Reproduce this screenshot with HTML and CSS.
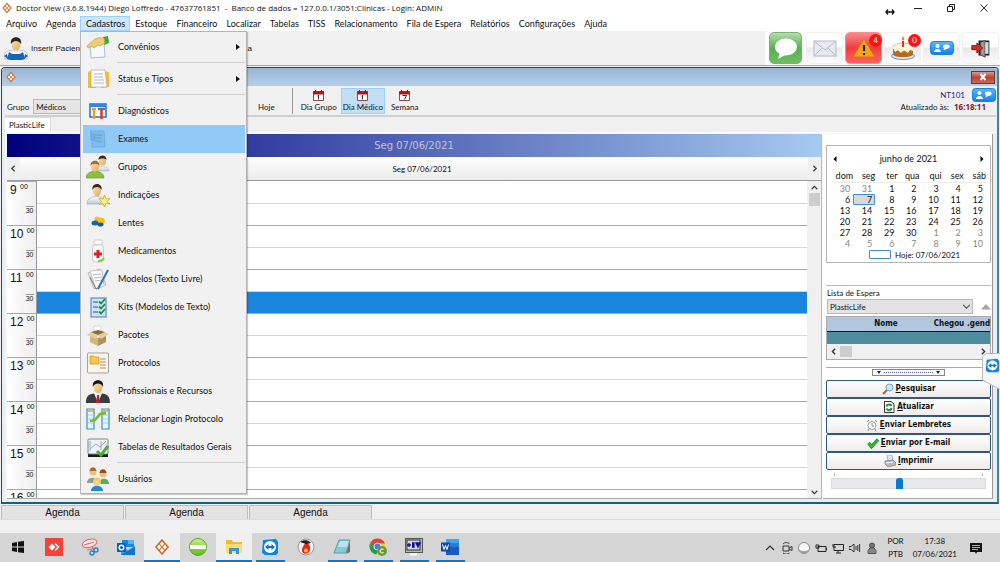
FILE: index.html
```html
<!DOCTYPE html>
<html lang="pt-BR">
<head>
<meta charset="utf-8">
<title>Doctor View</title>
<link rel="stylesheet" href="styles.css">
</head>
<body>
<svg class="defs" width="0" height="0" aria-hidden="true">
  <defs>
    <linearGradient id="gShirt" x1="0" y1="0" x2="0" y2="1"><stop offset="0" stop-color="#fff"/><stop offset="1" stop-color="#b9cbd3"/></linearGradient>
    <linearGradient id="gSkin" x1="0" y1="0" x2="1" y2="1"><stop offset="0" stop-color="#ffe3ad"/><stop offset="1" stop-color="#e0a95c"/></linearGradient>
    <linearGradient id="gBlue" x1="0" y1="0" x2="0" y2="1"><stop offset="0" stop-color="#5ab8ff"/><stop offset="1" stop-color="#0d7fee"/></linearGradient>
    <linearGradient id="gGreen" x1="0" y1="0" x2="0" y2="1"><stop offset="0" stop-color="#c8f08a"/><stop offset="1" stop-color="#5db81e"/></linearGradient>
    <symbol id="logo" viewBox="0 0 24 24"><path d="M12 1 21.500 12 12 23 2.500 12Z" fill="#d0702c"/><path d="M12 4.500 14.800 7.800 12 11 9.200 7.800ZM8.200 8.800 11 12 8.200 15.200 5.400 12ZM15.800 8.800 18.600 12 15.800 15.200 13 12ZM12 13 14.800 16.200 12 19.500 9.200 16.200Z" fill="#fffaf4"/></symbol>
    <symbol id="chat" viewBox="0 0 24 14"><rect x=".5" y=".5" width="23" height="13" rx="3" fill="url(#gBlue)" stroke="#1c7fd8"/><circle cx="7.500" cy="5" r="2" fill="#fff"/><path d="M4 11c0-4 7-4 7 0Z" fill="#fff"/><path d="M16 3.500c5-.5 5 4.500 0 4.500l-2.500 1.500.5-2c-2-1.500-1-4 2-4Z" fill="#fff"/></symbol>
    <symbol id="viewer" viewBox="0 0 18 18"><path d="M2 2 15 1 17 4V15L15 17H4L1 15Z" fill="#0a84e8"/><circle cx="9" cy="9" r="6" fill="#fff"/><path d="M4 9 7.500 6V8H10.500V6L14 9 10.500 12V10H7.500V12Z" fill="#0a6fd0"/></symbol>
  </defs>
</svg>

<header class="titlebar">
  <svg class="i12"><use href="#logo"/></svg>
  <h1 class="titlebar-text">Doctor View (3.6.8.1944) Diego Loffredo - 47637761851 &nbsp;- &nbsp;Banco de dados = 127.0.0.1/3051:Clinicas - Login: ADMIN</h1>
  <svg class="resize" viewBox="0 0 10 8"><path d="M1 4H9M3 1.500 1 4 3 6.500M7 1.500 9 4 7 6.500" fill="none" stroke="#111" stroke-width="1.300"/></svg>
  <div class="window-controls">
    <button aria-label="Minimizar"><svg viewBox="0 0 10 10"><path d="M1 5.500H9" stroke="#222"/></svg></button>
    <button aria-label="Restaurar"><svg viewBox="0 0 10 10"><path d="M1.500 3.500H6.500V8.500H1.500ZM3.500 3.500V1.500H8.500V6.500H6.500" fill="none" stroke="#222"/></svg></button>
    <button aria-label="Fechar"><svg viewBox="0 0 10 10"><path d="M1.500 1.500 8.500 8.500M8.500 1.500 1.500 8.500" stroke="#222"/></svg></button>
  </div>
</header>

<nav class="menubar">
  <button>Arquivo</button>
  <button>Agenda</button>
  <div class="menu-host">
    <button class="is-open" aria-haspopup="true" aria-expanded="true">Cadastros</button>
    <div class="dropdown" role="menu">
      <button role="menuitem"><svg viewBox="0 0 24 24"><path d="M4 9 18 8 19 22 5 23Z" fill="#f4f9fd" stroke="#a9bed0"/><path d="M17 2 22 1 23 8 18 10Z" fill="#36a83a"/><path d="M1 11 9 4C12 2 15 3 18 3L19 8 14 11 12 10 8 13 6 11 2 13Z" fill="#efcb72" stroke="#cf9f43" stroke-width=".7"/></svg><span>Convênios</span><i class="sub"></i></button>
      <hr>
      <button role="menuitem"><svg viewBox="0 0 24 24"><path d="M2 5 8 3 10 21H2Z" fill="#f3c02c"/><path d="M16 4 23 5V20L15 21Z" fill="#f3c02c"/><path d="M5 3H19L21 20H5Z" fill="#fafafa" stroke="#a8a8a8" stroke-width=".7"/><path d="M8 7H17M8 10H17M8 13H18M8 16H18" stroke="#bbb"/></svg><span>Status e Tipos</span><i class="sub"></i></button>
      <hr>
      <button role="menuitem"><svg viewBox="0 0 24 24"><rect x="4" y="5" width="16" height="13" fill="#fff" stroke="#1c71d2" stroke-width="1.500"/><path d="M4 6.500H20" stroke="#2f86e6" stroke-width="3"/><path d="M8 9V20M6 10H10" stroke="#eba21c" stroke-width="2.500"/><path d="M12 10H19" stroke="#637588" stroke-width="2.500"/><path d="M15.500 10V20" stroke="#dd3a26" stroke-width="2.500"/></svg><span>Diagnósticos</span></button>
      <button role="menuitem" class="is-active"><svg viewBox="0 0 24 24"><path d="M6 4H18L19 20H6Z" fill="#7ebcea" stroke="#6aaee0"/><path d="M9 8H16M9 11H16M9 14H16M5 3V13H8V6" stroke="#5a9fd2" fill="none"/></svg><span>Exames</span></button>
      <button role="menuitem"><svg viewBox="0 0 24 24"><path d="M10 16C10 10 23 10 23 16Z" fill="url(#gShirt)" stroke="#97adb8" stroke-width=".5"/><ellipse cx="16.500" cy="6" rx="3.500" ry="4.500" fill="url(#gSkin)"/><path d="M12.500 5C12-1 21-1 20.500 5 19 3 14 3 12.500 5Z" fill="#3e2a1d"/><path d="M0 23C0 14 18 14 18 23Z" fill="#8cc040" stroke="#5e9426" stroke-width=".6"/><ellipse cx="9" cy="12" rx="4" ry="5" fill="url(#gSkin)"/><path d="M4.500 11C4 4 14 4 13.500 11 12 8 6 8 4.500 11Z" fill="#a56a2b"/></svg><span>Grupos</span></button>
      <button role="menuitem"><svg viewBox="0 0 24 24"><path d="M1 21C0 11 21 11 20 21Z" fill="url(#gShirt)" stroke="#8fa9b5" stroke-width=".6"/><ellipse cx="11" cy="7.500" rx="4" ry="6" fill="url(#gSkin)"/><path d="M6.500 7C5-1 17-1 15.500 7 14 3 8 3 6.500 7Z" fill="#3a271c"/><path d="M18.500 12 20 16 24 15.500 21 18.500 24 21 20 20.500 18.500 24 17 20.500 13 21.500 15.500 18.500 13 15.500 17 16Z" fill="#ffed8a" stroke="#d0a51d" stroke-width=".8"/></svg><span>Indicações</span></button>
      <button role="menuitem"><svg viewBox="0 0 24 24"><ellipse cx="15" cy="10" rx="4" ry="3.500" fill="#f5bf19"/><circle cx="11" cy="8" r="2.500" fill="#f5bf19"/><ellipse cx="9" cy="12" rx="3.500" ry="2.500" fill="#1266a5"/><ellipse cx="14.500" cy="13.500" rx="3" ry="2" fill="#195b91"/></svg><span>Lentes</span></button>
      <button role="menuitem"><svg viewBox="0 0 24 24"><rect x="8" y="1" width="8" height="5" rx="1" fill="#fdfdfd" stroke="#bbb" stroke-width=".7"/><rect x="6.500" y="6" width="11" height="17" rx="3" fill="#fafafa" stroke="#b9b9b9" stroke-width=".7"/><path d="M12 11V19M8 15H16" stroke="#e11e1e" stroke-width="3"/><path d="M12 22C16 22 17 21 18 19" stroke="#7ed03c" stroke-width="2" fill="none"/></svg><span>Medicamentos</span></button>
      <button role="menuitem"><svg viewBox="0 0 24 24"><path d="M2 6 14 2 20 18 8 22Z" fill="#e6e6e6" stroke="#aaa" stroke-width=".7"/><path d="M4 4 16 3 18 19 10 22Z" fill="#fafafa" stroke="#b5b5b5" stroke-width=".7"/><path d="M7 8 15 7M8 11 16 10M9 14 16 13" stroke="#bbb"/><path d="M22 3 14 18 12 22" stroke="#2d72c4" stroke-width="2" fill="none"/><path d="M4 10 10 22 13 20" stroke="#777" fill="none"/></svg><span>Modelos (Texto Livre)</span></button>
      <button role="menuitem"><svg viewBox="0 0 24 24"><rect x="5" y="3" width="15" height="19" fill="#cfe3fb" stroke="#4b74c8"/><path d="M7 7H12M7 12H12M7 17H12" stroke="#5b82c8" stroke-width="1.500"/><path d="M13 6.500 15 8.500 19 4M13 11.500 15 13.500 19 9M13 16.500 15 18.500 19 14" fill="none" stroke="#189030" stroke-width="1.800"/></svg><span>Kits (Modelos de Texto)</span></button>
      <button role="menuitem"><svg viewBox="0 0 24 24"><path d="M8 3H15V11H8Z" fill="#fff" stroke="#c4c4c4" stroke-width=".6"/><path d="M4 12 12 15V23L4 19Z" fill="#d0b57a"/><path d="M20 12 12 15V23L20 19Z" fill="#ae9058"/><path d="M5 9 12 12 10 16 1 12ZM19 9 12 12 15 16 23 11Z" fill="#e5cf98"/><path d="M5 9 12 7 19 9 12 12Z" fill="#8a6e3d"/></svg><span>Pacotes</span></button>
      <button role="menuitem"><svg viewBox="0 0 24 24"><rect x="1.500" y="2" width="21" height="20" rx="1" fill="#f8f5ef" stroke="#a5a29b"/><path d="M4 5H8L9 6H13V13H4Z" fill="#f5c74a" stroke="#c7941e" stroke-width=".7"/><path d="M14 8H20M14 11H20M14 14H20M14 17H20" stroke="#d2b186" stroke-width="1.500"/></svg><span>Protocolos</span></button>
      <button role="menuitem"><svg viewBox="0 0 24 24"><path d="M0 24C0 14 6 15 12 14 18 15 24 14 24 24Z" fill="#3a3b3f"/><path d="M8 14H16L12 24Z" fill="#fff"/><path d="M11 16H13L14 24H10Z" fill="#c72020"/><ellipse cx="12" cy="8.500" rx="4.300" ry="6" fill="url(#gSkin)"/><path d="M7 8C5-1 19-1 17 8 16 4 9 3 7 8Z" fill="#171310"/></svg><span>Profissionais e Recursos</span></button>
      <button role="menuitem"><svg viewBox="0 0 24 24"><path d="M1 2H8V22H1ZM23 2H16V22H23Z" fill="#e9f5fd" stroke="#3490cc" stroke-width="1.200"/><path d="M2 4H7M17 4H22" stroke="#f2b443" stroke-width="2"/><path d="M2 8H7M2 12H7M2 16H7M17 8H22M17 12H22M17 16H22" stroke="#a9cfe8"/><path d="M4 14 9 13 14 7 20 6" stroke="#79b92d" stroke-width="2.500" fill="none"/></svg><span>Relacionar Login Protocolo</span></button>
      <button role="menuitem"><svg viewBox="0 0 24 24"><path d="M2 18H22V22H2Z" fill="#16181a"/><rect x="2" y="4" width="20" height="15" rx="1" fill="#eef2f5" stroke="#7b8489"/><path d="M4 14 10 9 14 12 20 6M15 6V15M4 6V16" stroke="#9fabb3" fill="none"/><path d="M11 16 15 20 22 11" stroke="#4bb03a" stroke-width="3" fill="none"/></svg><span>Tabelas de Resultados Gerais</span></button>
      <hr>
      <button role="menuitem"><svg viewBox="0 0 24 24"><path d="M1 16C1 9 12 9 12 16Z" fill="#8e9ba5"/><circle cx="7" cy="5" r="3.500" fill="#efc080"/><path d="M3.500 4C4-1 10-1 10.500 4Z" fill="#a56f2c"/><path d="M13 17C13 10 23 10 23 17Z" fill="#4fb068"/><circle cx="17" cy="7" r="3.500" fill="#efc080"/><path d="M13.500 6C14 1 20 1 20.500 6Z" fill="#94471b"/><path d="M5 24C5 17 17 17 17 24Z" fill="#2487d6"/><circle cx="11" cy="14.500" r="4" fill="#f3d04a"/><circle cx="11" cy="15.500" r="2.500" fill="#f6cf9b"/></svg><span>Usuários</span></button>
    </div>
  </div>
  <button>Estoque</button>
  <button>Financeiro</button>
  <button>Localizar</button>
  <button>Tabelas</button>
  <button>TISS</button>
  <button>Relacionamento</button>
  <button>Fila de Espera</button>
  <button>Relatórios</button>
  <button>Configurações</button>
  <button>Ajuda</button>
</nav>

<section class="toolbar">
  <div class="toolbar-left">
    <button class="patient"><svg viewBox="0 0 24 24"><path d="M0 22C0 14 6 14 12 14 18 14 24 14 24 22 18 25 6 25 0 22Z" fill="#f0f4f7" stroke="#8ea8bd" stroke-width=".6"/><path d="M5 16 8 18H16L19 16 21 23C16 25 8 25 3 23Z" fill="#1766b5"/><path d="M0 20 3 18 4 23Z M24 20 21 18 20 23Z" fill="#1766b5"/><ellipse cx="12" cy="8.500" rx="4.500" ry="6" fill="url(#gSkin)"/><path d="M7 8C5-1 19-1 17 8 15 4 9 4 7 8Z" fill="#2b2522"/></svg>Inserir Paciente</button>
    <span class="toolbar-tail">a</span>
  </div>
  <div class="toolbar-right">
    <button class="tool green" aria-label="Mensagens"><svg viewBox="0 0 24 24"><ellipse cx="12" cy="11" rx="11" ry="8.500" fill="#fff"/><path d="M6 16 4 23 13 18Z" fill="#fff"/></svg></button>
    <button class="tool" aria-label="E-mail"><svg viewBox="0 0 24 24"><rect x="1" y="5" width="22" height="15" fill="#e6eaf0" stroke="#b4bbc4"/><path d="M1 5 12 14 23 5M1 20 9 12M23 20 15 12" fill="none" stroke="#b4bbc4"/></svg></button>
    <button class="tool red" aria-label="Alertas"><svg viewBox="0 0 24 24"><path d="M12 3 23 21H1Z" fill="#f9a31b" stroke="#d9780a"/><path d="M12 9V15M12 17V19" stroke="#222" stroke-width="2.200"/></svg><b class="badge">4</b></button>
    <button class="tool" aria-label="Aniversários"><svg viewBox="0 0 24 24"><ellipse cx="12" cy="20" rx="11.500" ry="3.500" fill="#dbe9f7" stroke="#6d94c0"/><path d="M2 12H22V19C18 22 6 22 2 19Z" fill="#b06d22"/><ellipse cx="12" cy="11" rx="10" ry="4" fill="#fff6e0" stroke="#c99a54" stroke-width=".6"/><path d="M2 12 4 16 7 14 10 17 13 14 17 17 19 14 22 15V11H2Z" fill="#fff3d6"/><path d="M12 5V11" stroke="#d33" stroke-width="2"/><path d="M12 0 13.500 3 12 5 10.500 3Z" fill="#f08020"/></svg><b class="badge">0</b></button>
    <button class="tool" aria-label="Conversas"><svg class="chat"><use href="#chat"/></svg></button>
    <button class="tool exit" aria-label="Sair"><svg viewBox="0 0 24 24"><path d="M9 3H22V21H9Z" fill="#222"/><path d="M11 5 17 3V23L11 20Z" fill="#999" stroke="#333"/><path d="M17 5H21V19H17Z" fill="#d6ded8"/><path d="M1 9H7V6L14 12 7 18V14H1Z" fill="#cc3325" stroke="#6d1008"/></svg></button>
  </div>
</section>

<main class="child-window">
  <div class="child-title"><svg class="i12"><use href="#logo"/></svg><button class="child-close" aria-label="Fechar janela"><svg viewBox="0 0 10 8"><path d="M2.500 1 7.500 7M7.500 1 2.500 7" stroke="#fff" stroke-width="2"/></svg></button></div>
  <div class="child-toolbar">
    <div class="group"><label for="grupo">Grupo</label><select id="grupo"><option>Médicos</option></select></div>
    <button class="view today">Hoje</button>
    <div class="views">
      <button class="view"><svg viewBox="0 0 11 11"><path d="M.5 1.500H10.500V10.500H.5Z" fill="#fff" stroke="#8a4b42"/><path d="M0 3H11" stroke="#b5121b" stroke-width="3"/><path d="M2.500 0V2M8.500 0V2M5.500 5V9.500M4.500 6H5.500" stroke="#333"/></svg>Dia Grupo</button>
      <button class="view is-active"><svg viewBox="0 0 11 11"><path d="M.5 1.500H10.500V10.500H.5Z" fill="#fff" stroke="#8a4b42"/><path d="M0 3H11" stroke="#b5121b" stroke-width="3"/><path d="M2.500 0V2M8.500 0V2M5.500 5V9.500M4.500 6H5.500" stroke="#333"/></svg>Dia Médico</button>
      <button class="view"><svg viewBox="0 0 11 11"><path d="M.5 1.500H10.500V10.500H.5Z" fill="#fff" stroke="#8a4b42"/><path d="M0 3H11" stroke="#b5121b" stroke-width="3"/><path d="M2.500 0V2M8.500 0V2M3.500 5.500H7.500L5.500 9.500" stroke="#333" fill="none"/></svg>Semana</button>
    </div>
    <div class="status">
      <div class="status-top"><span>NT101</span><svg class="chat"><use href="#chat"/></svg></div>
      <div class="status-line">Atualizado às: <b>16:18:11</b></div>
    </div>
  </div>
  <div class="doc-tabs"><button>PlasticLife</button></div>

  <div class="workspace">
    <section class="agenda">
      <div class="agenda-date">Seg 07/06/2021</div>
      <div class="agenda-head"><button class="nav" aria-label="Anterior"><svg viewBox="0 0 8 8"><path d="M5 1.500 2.500 4 5 6.500" fill="none" stroke="#444" stroke-width="1.200"/></svg></button><span>Seg 07/06/2021</span><button class="nav" aria-label="Próximo"><svg viewBox="0 0 8 8"><path d="M3 1.500 5.500 4 3 6.500" fill="none" stroke="#444" stroke-width="1.200"/></svg></button></div>
      <div class="agenda-body">
        <div class="slots">
          <table>
            <tr class="hour"><th>9 <sup>00</sup></th><td></td></tr><tr><th><sup>30</sup></th><td></td></tr>
            <tr class="hour"><th>10 <sup>00</sup></th><td></td></tr><tr><th><sup>30</sup></th><td></td></tr>
            <tr class="hour"><th>11 <sup>00</sup></th><td></td></tr><tr class="selected"><th><sup>30</sup></th><td></td></tr>
            <tr class="hour"><th>12 <sup>00</sup></th><td></td></tr><tr><th><sup>30</sup></th><td></td></tr>
            <tr class="hour"><th>13 <sup>00</sup></th><td></td></tr><tr><th><sup>30</sup></th><td></td></tr>
            <tr class="hour"><th>14 <sup>00</sup></th><td></td></tr><tr><th><sup>30</sup></th><td></td></tr>
            <tr class="hour"><th>15 <sup>00</sup></th><td></td></tr><tr><th><sup>30</sup></th><td></td></tr>
            <tr class="hour"><th>16 <sup>00</sup></th><td></td></tr>
          </table>
        </div>
        <div class="vscroll"><svg viewBox="0 0 8 8"><path d="M1.500 5.500 4 3 6.500 5.500" fill="none" stroke="#444" stroke-width="1.200"/></svg><i></i><svg viewBox="0 0 8 8"><path d="M1.500 2.500 4 5 6.500 2.500" fill="none" stroke="#444" stroke-width="1.200"/></svg></div>
      </div>
    </section>

    <aside class="side">
      <div class="month">
        <div class="month-head"><button aria-label="Mês anterior"><svg viewBox="0 0 6 6"><path d="M4.500 0V6L1.500 3Z"/></svg></button><span>junho de 2021</span><button aria-label="Próximo mês"><svg viewBox="0 0 6 6"><path d="M1.500 0V6L4.500 3Z"/></svg></button></div>
        <table>
          <thead><tr><th>dom</th><th>seg</th><th>ter</th><th>qua</th><th>qui</th><th>sex</th><th>sáb</th></tr></thead>
          <tbody>
            <tr><td class="out">30</td><td class="out">31</td><td>1</td><td>2</td><td>3</td><td>4</td><td>5</td></tr>
            <tr><td>6</td><td class="today-cell">7</td><td>8</td><td>9</td><td>10</td><td>11</td><td>12</td></tr>
            <tr><td>13</td><td>14</td><td>15</td><td>16</td><td>17</td><td>18</td><td>19</td></tr>
            <tr><td>20</td><td>21</td><td>22</td><td>23</td><td>24</td><td>25</td><td>26</td></tr>
            <tr><td>27</td><td>28</td><td>29</td><td>30</td><td class="out">1</td><td class="out">2</td><td class="out">3</td></tr>
            <tr><td class="out">4</td><td class="out">5</td><td class="out">6</td><td class="out">7</td><td class="out">8</td><td class="out">9</td><td class="out">10</td></tr>
          </tbody>
        </table>
        <div class="month-foot"><i></i>Hoje: 07/06/2021</div>
      </div>

      <div class="waiting">
        <label for="espera">Lista de Espera</label>
        <div class="waiting-pick">
          <select id="espera"><option>PlasticLife</option></select>
          <svg class="caret" viewBox="0 0 8 8"><path d="M1 2.500 4 5.500 7 2.500" fill="none" stroke="#555"/></svg>
          <svg class="collapse" viewBox="0 0 10 6"><path d="M0 5.500 5 0 10 5.500Z" fill="#a3a3a3"/></svg>
        </div>
        <div class="waiting-grid">
          <table><thead><tr><th class="col-name">Nome</th><th class="col-in">Chegou</th><th class="col-ag">.gend</th></tr></thead><tbody><tr><td colspan="3"></td></tr></tbody></table>
          <div class="hscroll"><svg viewBox="0 0 8 8"><path d="M5.500 1.500 3 4 5.500 6.500" fill="none" stroke="#333" stroke-width="1.200"/></svg><i></i><svg viewBox="0 0 8 8"><path d="M2.500 1.500 5 4 2.500 6.500" fill="none" stroke="#333" stroke-width="1.200"/></svg></div>
        </div>
      </div>

      <div class="splitter"><button aria-label="Recolher painel"><i></i><span></span><i></i></button></div>

      <div class="actions">
        <button><svg viewBox="0 0 12 12"><path d="M1 11 5 7" stroke="#9a6a3a" stroke-width="2"/><circle cx="7.500" cy="4.500" r="3.500" fill="#cdeafd" stroke="#69a4d0"/></svg><span><u>P</u>esquisar</span></button>
        <button><svg viewBox="0 0 12 12"><path d="M1.500.5H8L11 3V11.500H1.500Z" fill="#fff" stroke="#333"/><path d="M3.500 5.500C4 2.500 8 3 8.500 5M8.500 7C8 10 4 9.500 3.500 7.500" stroke="#15923a" stroke-width="2" fill="none"/></svg><span><u>A</u>tualizar</span></button>
        <button><svg viewBox="0 0 12 12"><circle cx="6" cy="6.500" r="4" fill="#fff" stroke="#999"/><path d="M1 3 3 1M11 3 9 1M6 4V7H8M3 10 2 12M9 10 10 12" stroke="#888" fill="none"/></svg><span><u>E</u>nviar Lembretes</span></button>
        <button><svg viewBox="0 0 12 12"><path d="M1.500 6 4.500 9.500 11 2.500" fill="none" stroke="#0a6a10" stroke-width="3.200"/><path d="M1.500 6 4.500 9.500 11 2.500" fill="none" stroke="#27c728" stroke-width="2"/></svg><span><u>E</u>nviar por E-mail</span></button>
        <button><svg viewBox="0 0 12 12"><path d="M3 0H8L9 6H4Z" fill="#dbe6ff" stroke="#8c9ad0" stroke-width=".7"/><path d="M1 6 9 5 12 8V10L4 12 1 9Z" fill="#b8b8bd" stroke="#77777d" stroke-width=".7"/><path d="M2 8 9 7" stroke="#fff"/></svg><span><u>I</u>mprimir</span></button>
      </div>
      <div class="zoom"><div class="ticks"><i></i><i></i></div><input type="range" min="0" max="100" value="44" aria-label="Intervalo"></div>
    </aside>
  </div>
</main>

<button class="viewer-tab" aria-label="Painel TeamViewer"><svg viewBox="0 0 18 38"><path d="M19 .5H4L.5 4V27L19 37Z" fill="#f6f6f6" stroke="#bdbdbd"/><use href="#viewer" x="3" y="5" width="15" height="15"/></svg></button>

<nav class="windows"><button>Agenda</button><button>Agenda</button><button>Agenda</button></nav>

<footer class="taskbar">
  <div class="apps">
    <button aria-label="Iniciar"><svg viewBox="0 0 18 18"><path d="M3 5 8 4V8.500H3ZM9 3.800 15 3V8.500H9ZM3 9.500H8V14L3 13ZM9 9.500H15V15L9 14.200Z" fill="#111"/></svg></button>
    <button aria-label="AnyDesk"><svg viewBox="0 0 18 18"><rect width="18" height="18" fill="#f5413b"/><path d="M7 5.500 10.500 9 7 12.500 3.500 9Z" fill="#fff"/><path d="M10 5.500 13.500 9 10 12.500" fill="none" stroke="#fff" stroke-width="1.500"/></svg></button>
    <button aria-label="Captura"><svg viewBox="0 0 18 18"><ellipse cx="8.500" cy="5.500" rx="7.500" ry="4" fill="#f6e5e5" stroke="#d96969" transform="rotate(-15 8 5)"/><path d="M3 7 13 4M6 12 15 10M11 8 14 15" stroke="#d96969"/><circle cx="11" cy="15" r="2" fill="none" stroke="#3583c4" stroke-width="1.500"/><circle cx="15" cy="12" r="2" fill="none" stroke="#3583c4" stroke-width="1.500"/></svg></button>
    <button aria-label="Outlook"><svg viewBox="0 0 18 18"><path d="M5 2H17V9H5Z" fill="#1687dd"/><path d="M11 2H17V6H11Z" fill="#50b5f4"/><path d="M4 8 11 12 18 8V17H4Z" fill="#2aa0ea"/><path d="M4 17 18 9V17Z" fill="#1272c4"/><rect y="5" width="9" height="9" fill="#0b62b4"/><circle cx="4.500" cy="9.500" r="2.300" fill="none" stroke="#fff" stroke-width="1.400"/></svg></button>
    <button class="on" aria-label="Doctor View"><svg viewBox="0 0 18 18"><use href="#logo"/></svg></button>
    <button aria-label="Servidor"><svg viewBox="0 0 18 18"><circle cx="9" cy="9" r="8.500" fill="url(#gGreen)" stroke="#58a823"/><path d="M1 7H17V11H1Z" fill="#fff"/></svg></button>
    <button class="on" aria-label="Explorador"><svg viewBox="0 0 18 18"><path d="M1 2H7L8 4H17V15H1Z" fill="#f0b93a"/><path d="M1 6H17V15H1Z" fill="#ffdc72"/><path d="M4 16V10H14V16H11V13H7V16Z" fill="#3a93dc"/></svg></button>
    <button class="run" aria-label="TeamViewer"><svg viewBox="0 0 18 18"><use href="#viewer"/></svg></button>
    <button aria-label="Nero"><svg viewBox="0 0 18 18"><circle cx="9" cy="9" r="8" fill="#eee" stroke="#999"/><path d="M9 2C11 6 14 7 13 12 12 17 5 17 5 12 5 9 8 7 9 2Z" fill="#e3241b"/><path d="M3 4C7 1 12 2 14 5L9 6Z" fill="#222"/><circle cx="9" cy="12.500" r="2" fill="#ffc23b"/></svg></button>
    <button class="run" aria-label="Bloco de notas"><svg viewBox="0 0 18 18"><path d="M6 2H17L13 15H1Z" fill="#8cc8d4" stroke="#5e9daa"/><path d="M7 3H16L14 9H5Z" fill="#b8e4ec"/><path d="M17 3V14L13 16Z" fill="#78706a"/></svg></button>
    <button class="run" aria-label="Chrome"><svg viewBox="0 0 18 18"><circle cx="8.500" cy="8.500" r="8" fill="#f9cb2e"/><path d="M1.600 4.500A8 8 0 0 1 16 5.500H8.500L5.500 10.500Z" fill="#e2443a"/><path d="M1.600 4.500 5.500 11 8.500 12 7.500 16.500A8 8 0 0 1 1.600 4.500Z" fill="#239b56"/><circle cx="8.500" cy="8.500" r="3.800" fill="#fff"/><circle cx="8.500" cy="8.500" r="3" fill="#3f7fe8"/><circle cx="13" cy="13" r="5" fill="#679e38"/><path d="M14.500 11.500A2 2 0 1 0 14.500 14.500" fill="none" stroke="#fff"/></svg></button>
    <button class="run" aria-label="Terminal"><svg viewBox="0 0 18 18"><rect x=".5" y=".5" width="17" height="14" fill="#b9b9b9" stroke="#555"/><rect x="2" y="2" width="13" height="10" fill="#d6d6d6" stroke="#333"/><path d="M2 7H6M4 5V9M7 5H9V9H7M11 5H15L13 9Z" fill="#10109c" stroke="#10109c" stroke-width="1.300"/><path d="M5 16.500H12" stroke="#fff" stroke-width="2"/></svg></button>
    <button class="run" aria-label="Word"><svg viewBox="0 0 18 18"><path d="M5 1H18V17H5Z" fill="#185abd"/><path d="M5 1H18V5H5Z" fill="#41a5ee"/><path d="M5 5H18V9H5Z" fill="#2b7cd3"/><rect y="4.500" width="9" height="9" fill="#144a9e"/><path d="M1.500 6.500 3 11.500 4.500 7.500 6 11.500 7.500 6.500" fill="none" stroke="#fff"/></svg></button>
  </div>
  <div class="tray">
    <svg viewBox="0 0 12 12"><path d="M2 8 6 4 10 8" fill="none" stroke="#333" stroke-width="1.200"/></svg>
    <svg viewBox="0 0 12 12"><path d="M2 4H8V9H2ZM8 6 11 4.500V8.500L8 7M2 2C4 0 7 0 8.500 2M2 11C4 12.500 7 12.500 8.500 11" fill="none" stroke="#333"/></svg>
    <svg viewBox="0 0 12 12"><circle cx="6" cy="6" r="5.500" fill="#f3f3f3" stroke="#888"/><path d="M1 5H11V7H1Z" fill="#fff"/><path d="M1 8C4 9.500 8 9.500 11 8 9 12.500 3 12.500 1 8Z" fill="#999"/></svg>
    <svg viewBox="0 0 12 12"><path d="M3 4.500H11V9.500H3ZM1 3H4V6H1ZM11.500 6V8" fill="none" stroke="#222"/></svg>
    <svg viewBox="0 0 12 12"><path d="M2 2.500H11.500V8.500H2ZM6 8.500V11M4 11H9M1 2V5H4" fill="none" stroke="#222"/></svg>
    <svg viewBox="0 0 12 12"><path d="M0 4.500H2L5 2V10L2 7.500H0ZM7 4V8M8.800 3V9M10.600 2V10" fill="none" stroke="#333"/></svg>
    <svg viewBox="0 0 12 12"><circle cx="6" cy="3.500" r="2.500" fill="#777" stroke="#444"/><path d="M2 11.500V8.500L4 6H8L10 8.500V11.500Z" fill="#888" stroke="#555"/></svg>
    <div class="lang">POR<br>PTB</div>
    <div class="clock">17:38<br>07/06/2021</div>
    <svg class="note" viewBox="0 0 12 12"><path d="M0 1H12V10H7L6 12 5 10H0Z" fill="#111"/><path d="M2 3.500H10M2 5.500H10M2 7.500H8" stroke="#ddd" stroke-width=".8"/></svg>
  </div>
</footer>
</body>
</html>
```

FILE: styles.css
```css
* { box-sizing: border-box; }
body {
  margin: 0;
  height: 100vh;
  display: flex;
  flex-direction: column;
  overflow: hidden;
  position: relative;
  background: #f0f0f0;
  color: #111;
  font: 9px/12px Lato, "Open Sans", sans-serif;
}
button, select, input { font: inherit; color: inherit; margin: 0; }
button { padding: 0; border: 0; background: none; white-space: nowrap; }
table { border-collapse: collapse; }
svg { display: block; flex: none; }
.defs { position: absolute; }
.i12 { width: 12px; height: 12px; }
.chat { width: 24px; height: 14px; }

.titlebar { display: flex; align-items: center; height: 16px; padding-left: 1px; background: #fff; flex: none; }
.titlebar-text { margin: 0 0 0 3px; font: 8px/12px "Open Sans", sans-serif; white-space: nowrap; }
.resize { width: 10px; height: 8px; margin: 0 6px 0 auto; align-self: flex-end; }
.window-controls { display: flex; }
.window-controls button { width: 33px; display: flex; justify-content: center; }
.window-controls svg { width: 10px; height: 10px; }

.menubar { display: flex; height: 15px; padding-left: 1px; background: #fff; flex: none; }
.menubar > button, .menu-host > button { height: 15px; padding: 0 4px 0 5px; }
.menu-host { position: relative; }
.menu-host > .is-open { padding: 0 5px 0 6px; background: #cce8ff; outline: 1px solid #99d1ff; outline-offset: -1px; }
.dropdown {
  position: absolute;
  top: 15px;
  left: 0;
  z-index: 5;
  width: 167px;
  padding: 1px 1px 0 2px;
  background: #f1f1f1;
  border: 1px solid #b4b4b4;
  box-shadow: 1px 1px 1px #0003;
}
.dropdown button { display: flex; align-items: center; width: 100%; height: 28px; padding: 0 5px 0 3px; text-align: left; }
.dropdown button svg { width: 24px; height: 24px; margin-right: 8px; }
.dropdown .is-active { background: #91c9f7; }
.dropdown hr { height: 1px; margin: 1px 0 2px 34px; border: 0; background: #cfcfcf; }
.sub { margin-left: auto; border: 3px solid transparent; border-left: 4px solid #111; border-right: 0; }

.toolbar { display: flex; justify-content: space-between; height: 35px; flex: none; border-bottom: 1px solid #a3a9a3; }
.toolbar-left { display: flex; align-items: center; width: 252px; padding-left: 4px; font: 8px "Liberation Sans", sans-serif; }
.patient { display: flex; align-items: center; gap: 3px; }
.patient svg { width: 24px; height: 24px; }
.toolbar-tail { margin-left: auto; }
.toolbar-right { display: flex; gap: 2px; padding: 1px 1px 0 2px; background: #fbfbfb; }
.tool { position: relative; width: 37px; height: 32px; display: grid; place-items: center; border-radius: 5px; border: 1px solid #f0f0f0; background: linear-gradient(#fff 45%, #e9e9e9 50%, #fbfbfb); }
.tool > svg:not(.chat) { width: 24px; height: 24px; }
.tool.exit > svg { width: 20px; height: 20px; }
.tool.green { width: 33px; margin: 0 2px; background: linear-gradient(#b7dcb1, #58b04e 50%, #6fbd62); border-color: #78b370; }
.tool.red { background: linear-gradient(#f98a8a, #f03c3c 50%, #ff6262); border-color: #ff8c8c; }
.badge { position: absolute; top: 1px; right: -1px; width: 13px; height: 13px; border-radius: 50%; background: #fa1414; color: #fff; font-size: 8px; line-height: 13px; font-weight: 400; text-align: center; }

.child-window { flex: 1; min-height: 0; display: flex; flex-direction: column; margin: 1px 1px 0; padding: 0 4px 3px 3px; border: 1px solid #38454b; border-width: 1px 2px 2px 1px; border-bottom-color: #17617f; border-right-color: #2f8cab; border-radius: 4px 4px 0 0; background: #e7eef4; }
.child-title { display: flex; align-items: center; justify-content: space-between; height: 18px; flex: none; margin: 0 -4px 0 -3px; padding: 0 2px 0 3px; background: linear-gradient(#9ab5d2, #b5cee9); border-radius: 3px 3px 0 0; }
.child-close { width: 24px; height: 13px; display: grid; place-items: center; border: 1px solid #7a342c; background: linear-gradient(#dc9a8c, #b74433 50%, #c96a55); }
.child-close svg { width: 10px; height: 8px; }
.child-toolbar { display: flex; align-items: flex-end; height: 31px; flex: none; padding: 0 5px 1px 2px; margin-right: -3px; background: #f0f0f0; border-bottom: 2px solid #d0d0d0; font-size: 8px; }
.group { display: flex; align-items: center; gap: 4px; width: 249px; }
.group select { appearance: none; width: 130px; height: 15px; padding: 0 2px; border: 1px solid #bbb; border-radius: 0; background: #e4e4e4; }
.view { display: grid; justify-items: center; align-content: center; gap: 1px; height: 26px; padding: 0 2px; line-height: 10px; }
.view svg { width: 11px; height: 11px; }
.view.is-active { background: #c2def5; outline: 1px solid #99d1ff; outline-offset: -1px; }
.today { align-content: end; padding-bottom: 2px; }
.views { display: flex; gap: 2px; margin-left: 15px; padding-left: 6px; border-left: 1px solid #999; }
.views .view:last-child { margin-left: 2px; }
.status { margin-left: auto; text-align: right; line-height: 10px; }
.status-top { display: flex; justify-content: flex-end; align-items: center; gap: 7px; margin-right: -5px; color: #23238e; }
.status-line { padding: 0 5px 2px 0; }
.status-line b { margin-left: 3px; color: #8b1616; font-family: "Open Sans", sans-serif; }
.doc-tabs { height: 16px; flex: none; margin-right: -3px; background: #f0f0f0; border-bottom: 1px solid #fff; font-size: 8px; }
.doc-tabs button { height: 15px; padding: 0 5px 0 4px; background: #fff; border: 1px solid #ddd; border-width: 1px 1px 0 0; }

.workspace { flex: 1; min-height: 0; display: grid; grid-template-columns: minmax(0, 1fr) 170px; gap: 1px; padding-top: 1px; background: #f5f5f5; }
.agenda { display: flex; flex-direction: column; min-height: 0; margin-left: 2px; background: #fff; border-right: 1px solid #bbb; border-bottom: 1px solid #aaa; }
.agenda-date { height: 23px; flex: none; display: grid; place-items: center; background: linear-gradient(90deg, #00007d, #a6caf0); color: #c0c4d6; font: 10px/12px "DejaVu Sans", sans-serif; }
.agenda-head { display: flex; align-items: stretch; justify-content: space-between; height: 24px; flex: none; background: linear-gradient(#fdfdfd, #ececec); border-bottom: 1px solid #999; font-size: 8px; }
.agenda-head span { align-self: center; padding-left: 16px; }
.nav { width: 13px; display: grid; place-items: center; background: #f0f0f0; }
.nav svg { width: 9px; height: 9px; }
.agenda-body { flex: 1; min-height: 0; display: flex; }
.slots { flex: 1; overflow: hidden; }
.slots table { width: 100%; table-layout: fixed; }
.slots tr { height: 22px; }
.slots th { width: 29px; height: 22px; padding: 0 2px 0 0; text-align: right; vertical-align: top; background: linear-gradient(90deg, #fff, #eee); font: 12px/17px "Liberation Sans", sans-serif; border-right: 1px solid #999; white-space: nowrap; }
.slots .hour th { padding: 0 0 0 3px; text-align: left; border-top: 1px solid #aaa; }
.slots th sup { font-size: 7px; line-height: 1; vertical-align: 5px; }
.slots tr:not(.hour) sup { border-top: 1px solid #999; vertical-align: 3px; }
.slots td { padding: 0; border-bottom: 1px solid #aaa; }
.slots .hour td { border-bottom-color: #d5d5d5; }
.slots .selected td { background: #1a85dc; }
.vscroll { width: 14px; display: flex; flex-direction: column; align-items: center; background: #f0f0f0; padding: 2px 0 1px; }
.vscroll svg { width: 9px; height: 9px; }
.vscroll i { width: 11px; height: 13px; margin: 1px 0 auto; background: #cdcdcd; }

.side { display: flex; flex-direction: column; min-height: 0; padding: 11px 1px 0 3px; background: #fff; border-right: 1px solid #999; border-bottom: 1px solid #aaa; }
.month { height: 118px; flex: none; border: 1px solid #b5b5b5; padding: 7px 4px 0; }
.month-head { display: flex; justify-content: space-between; padding: 0 1px 4px; }
.month-head svg { width: 6px; height: 6px; }
.month table { width: 100%; table-layout: fixed; line-height: 11px; }
.month th { padding: 0; height: 13px; font-weight: 400; text-align: right; border-bottom: 1px solid #eee; }
.month td { padding: 0 3px 0 0; height: 11px; text-align: right; }
.month .out { color: #888; }
.month .today-cell { background: #d8d8d8; outline: 1px solid #3f8fd8; outline-offset: -1px; border-radius: 1px; }
.month-foot { display: flex; align-items: center; justify-content: center; gap: 4px; padding-left: 12px; font-size: 8px; }
.month-foot i { width: 22px; height: 9px; border: 1px solid #3f8fd8; border-radius: 1px; }
.waiting { margin-top: 22px; padding-top: 1px; border-top: 1px solid #bbb; font-size: 8px; }
.waiting label { display: block; padding-left: 1px; }
.waiting-pick { position: relative; display: flex; align-items: center; justify-content: space-between; padding-left: 1px; }
.waiting-pick select { appearance: none; width: 146px; height: 15px; padding: 0 2px; border: 1px solid #bbb; border-radius: 0; background: #e3e3e3; }
.caret { position: absolute; left: 136px; width: 9px; height: 9px; pointer-events: none; }
.collapse { width: 10px; height: 6px; }
.waiting-grid { margin-top: 2px; border: 1px solid #aaa; }
.waiting-grid table { width: 100%; table-layout: fixed; }
.waiting-grid th { height: 14px; padding: 0; background: #b1c7de; border-bottom: 1px solid #111; white-space: nowrap; font: bold 8px/12px "DejaVu Sans Condensed", "DejaVu Sans", sans-serif; }
.waiting-grid td { height: 13px; padding: 0; background: #4c8ea0; }
.waiting-grid .col-name { width: 104px; padding-left: 14px; }
.col-in { width: 36px; }
.hscroll { display: flex; align-items: center; height: 15px; padding: 0 2px; background: #f0f0f0; }
.hscroll svg { width: 9px; height: 9px; }
.hscroll i { width: 12px; height: 11px; margin: 0 auto 0 2px; background: #cdcdcd; }
.splitter { margin-top: 7px; display: flex; justify-content: center; border-top: 1px solid #aaa; }
.splitter button { width: 73px; height: 7px; margin-top: 1px; padding: 0 4px; display: flex; align-items: center; gap: 3px; border: 1px solid #888; }
.splitter button i { border: 2px solid transparent; border-top: 3px solid #14146e; border-bottom: 0; }
.splitter button span { flex: 1; border-top: 1px dotted #5a5ab0; }
.actions { display: grid; margin-top: 4px; }
.actions button { display: flex; align-items: center; justify-content: center; gap: 2px; height: 18px; border: 1px solid #2f577f; border-radius: 2px; background: linear-gradient(#fff, #efebea); font: bold 8px/12px "DejaVu Sans Condensed", "DejaVu Sans", sans-serif; }
.actions svg { width: 12px; height: 12px; }
.zoom { padding: 3px 5px 0; }
.ticks { display: flex; justify-content: space-between; padding: 0 3px; }
.ticks i { width: 1px; height: 3px; background: #bbb; }
.zoom input { appearance: none; display: block; width: 100%; height: 11px; margin-top: 2px; background: #e7eaea; border: 1px solid #dadada; }
.zoom input::-webkit-slider-thumb { appearance: none; width: 7px; height: 11px; background: #0878d2; border-radius: 3px 3px 0 0; }

.viewer-tab { position: absolute; right: 0; top: 353px; z-index: 4; }
.viewer-tab svg { width: 18px; height: 38px; }

.windows { display: flex; gap: 1px; height: 15px; flex: none; margin: 1px 0 13px; padding: 0 1px; border-bottom: 1px solid #ddd; }
.windows button { width: 123px; height: 14px; border: 1px solid #bdbdbd; border-bottom: 0; background: #e3e3e3; font: 10px/12px "Liberation Sans", sans-serif; }

.taskbar { display: flex; justify-content: space-between; height: 29px; flex: none; background: #d5d5d5; }
.apps { display: flex; }
.apps button { width: 36px; height: 29px; display: grid; place-items: center; border-bottom: 2px solid transparent; }
.apps svg { width: 18px; height: 18px; }
.apps .on { background: #efefef; border-color: #0a78d0; }
.apps .run { background: linear-gradient(#0a78d0, #0a78d0) center bottom / 29px 2px no-repeat border-box; }
.tray { display: flex; align-items: center; gap: 5px; padding-right: 18px; line-height: 13px; text-align: center; font-size: 8px; }
.tray > svg { width: 12px; height: 12px; }
.lang { margin-left: 4px; }
.clock { margin-left: 4px; }
.tray > .note { margin-left: 8px; }
```
